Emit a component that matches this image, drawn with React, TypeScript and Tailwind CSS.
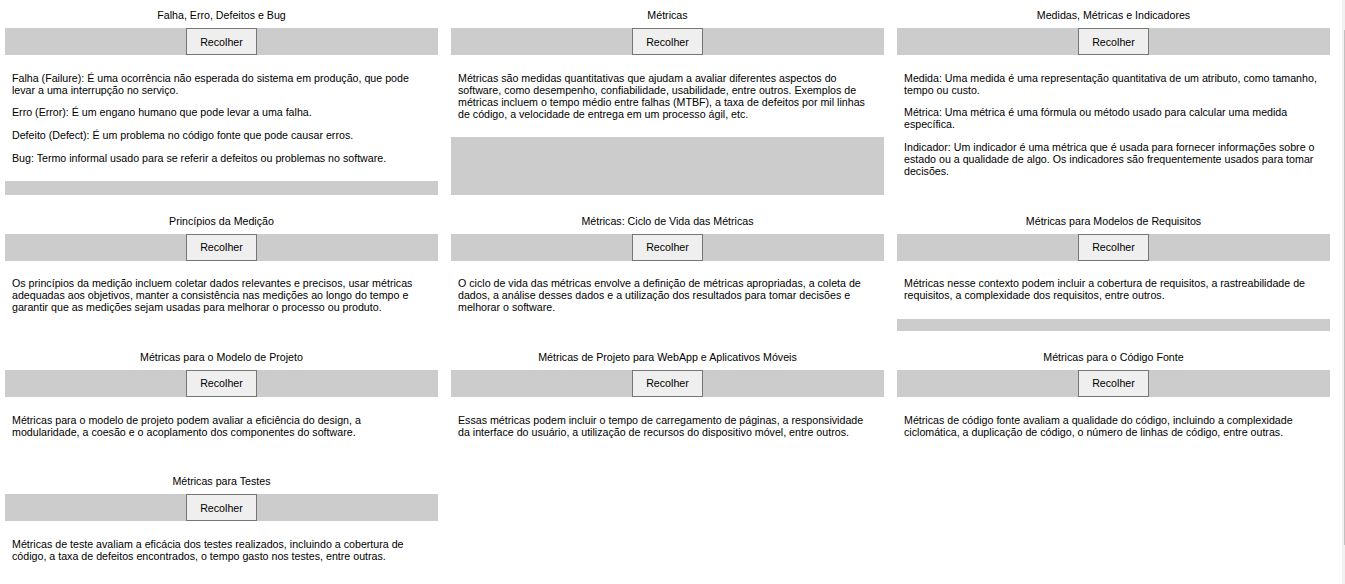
import { FC, useState } from 'react'

interface Topic {
  id: string
  title: string
  paragraphs: string[]
}

const topics: Topic[] = [
  {
    id: 'falha',
    title: 'Falha, Erro, Defeitos e Bug',
    paragraphs: [
      'Falha (Failure): É uma ocorrência não esperada do sistema em produção, que pode levar a uma interrupção no serviço.',
      'Erro (Error): É um engano humano que pode levar a uma falha.',
      'Defeito (Defect): É um problema no código fonte que pode causar erros.',
      'Bug: Termo informal usado para se referir a defeitos ou problemas no software.'
    ]
  },
  {
    id: 'metricas',
    title: 'Métricas',
    paragraphs: [
      'Métricas são medidas quantitativas que ajudam a avaliar diferentes aspectos do software, como desempenho, confiabilidade, usabilidade, entre outros. Exemplos de métricas incluem o tempo médio entre falhas (MTBF), a taxa de defeitos por mil linhas de código, a velocidade de entrega em um processo ágil, etc.'
    ]
  },
  {
    id: 'medidas',
    title: 'Medidas, Métricas e Indicadores',
    paragraphs: [
      'Medida: Uma medida é uma representação quantitativa de um atributo, como tamanho, tempo ou custo.',
      'Métrica: Uma métrica é uma fórmula ou método usado para calcular uma medida específica.',
      'Indicador: Um indicador é uma métrica que é usada para fornecer informações sobre o estado ou a qualidade de algo. Os indicadores são frequentemente usados para tomar decisões.'
    ]
  },
  {
    id: 'principios',
    title: 'Princípios da Medição',
    paragraphs: [
      'Os princípios da medição incluem coletar dados relevantes e precisos, usar métricas adequadas aos objetivos, manter a consistência nas medições ao longo do tempo e garantir que as medições sejam usadas para melhorar o processo ou produto.'
    ]
  },
  {
    id: 'ciclo',
    title: 'Métricas: Ciclo de Vida das Métricas',
    paragraphs: [
      'O ciclo de vida das métricas envolve a definição de métricas apropriadas, a coleta de dados, a análise desses dados e a utilização dos resultados para tomar decisões e melhorar o software.'
    ]
  },
  {
    id: 'requisitos',
    title: 'Métricas para Modelos de Requisitos',
    paragraphs: [
      'Métricas nesse contexto podem incluir a cobertura de requisitos, a rastreabilidade de requisitos, a complexidade dos requisitos, entre outros.'
    ]
  },
  {
    id: 'projeto',
    title: 'Métricas para o Modelo de Projeto',
    paragraphs: [
      'Métricas para o modelo de projeto podem avaliar a eficiência do design, a modularidade, a coesão e o acoplamento dos componentes do software.'
    ]
  },
  {
    id: 'webapp',
    title: 'Métricas de Projeto para WebApp e Aplicativos Móveis',
    paragraphs: [
      'Essas métricas podem incluir o tempo de carregamento de páginas, a responsividade da interface do usuário, a utilização de recursos do dispositivo móvel, entre outros.'
    ]
  },
  {
    id: 'codigo',
    title: 'Métricas para o Código Fonte',
    paragraphs: [
      'Métricas de código fonte avaliam a qualidade do código, incluindo a complexidade ciclomática, a duplicação de código, o número de linhas de código, entre outras.'
    ]
  },
  {
    id: 'testes',
    title: 'Métricas para Testes',
    paragraphs: [
      'Métricas de teste avaliam a eficácia dos testes realizados, incluindo a cobertura de código, a taxa de defeitos encontrados, o tempo gasto nos testes, entre outras.'
    ]
  }
]

const TopicCard: FC<{ topic: Topic }> = ({ topic }) => {
  const [open, setOpen] = useState(true)

  return (
    <div className="flex flex-col">
      <h3 className="pt-[9px] pb-[7px] text-center leading-[12px] font-normal">
        {topic.title}
      </h3>
      <div className="flex flex-1 flex-col bg-[#cccccc]">
        {/* Toggle bar */}
        <div className="flex justify-center">
          <button
            onClick={() => setOpen(!open)}
            className="h-[27px] w-[71px] border border-[#767676] bg-[#efefef] text-black leading-[12px] hover:bg-[#e5e5e5]"
          >
            {open ? 'Recolher' : 'Expandir'}
          </button>
        </div>

        {open && (
          <div className="bg-white px-[7px] pt-[6px] pb-[7px]">
            {topic.paragraphs.map((p, i) => (
              <p key={i} className="my-[10.67px] leading-[12px]">
                {p}
              </p>
            ))}
          </div>
        )}
      </div>
    </div>
  )
}

const App: FC = () => {
  return (
    <div className="relative min-h-[584px] bg-white font-['Liberation_Sans',Arial,sans-serif] text-[10.67px] text-black">
      <div className="grid grid-cols-[433px_433px_433px] gap-x-[13px] gap-y-[11px] pl-[5px]">
        {topics.map((topic) => (
          <TopicCard key={topic.id} topic={topic} />
        ))}
      </div>

      {/* Scrollbar sliver at the right edge */}
      <div className="fixed top-0 right-0 h-full w-[3px] bg-[#f1f1f1]">
        <div className="absolute top-[30px] bottom-[39px] left-[2px] w-px bg-[#c1c1c1]" />
      </div>
    </div>
  )
}

export default App
